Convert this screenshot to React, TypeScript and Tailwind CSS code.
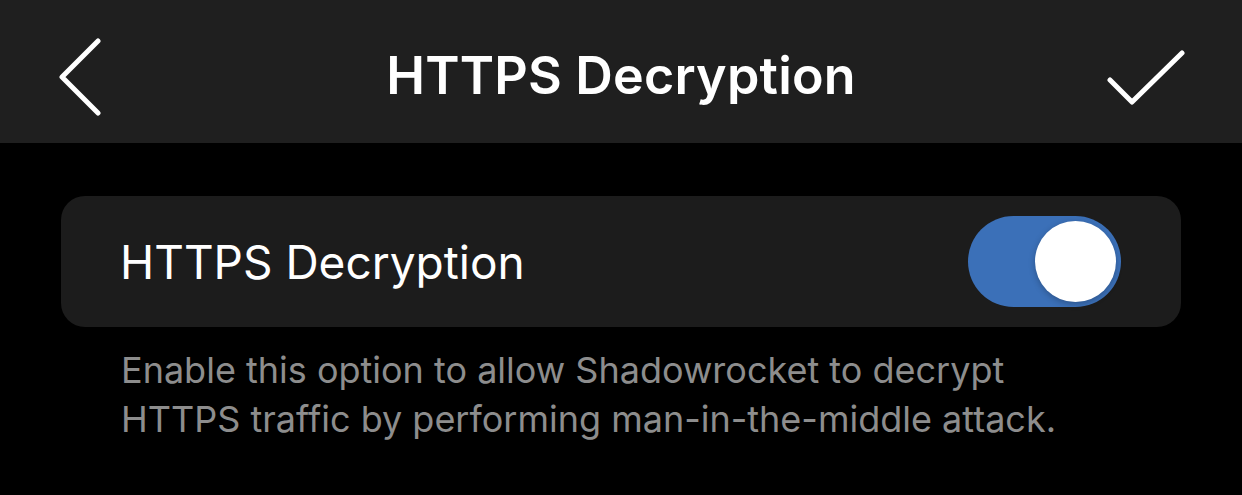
import React from "react";

const FONT = { fontFamily: "Inter, 'Noto Sans', sans-serif" };

const App = () => {
  return (
    <div className="w-[1242px] h-[495px] bg-black text-white overflow-hidden" style={FONT}>
      <header className="h-[143px] bg-[#1f1f1f] flex items-center px-[58px] pt-[10px]">
        <div className="flex-1 flex">
          <svg width="44" height="78" viewBox="0 0 44 78" fill="none">
            <path d="M40 3 L4 39 L40 75" stroke="white" strokeWidth="5" strokeLinecap="round" strokeLinejoin="round" />
          </svg>
        </div>
        <h1 className="text-[52px] font-semibold tracking-[0.2px] mt-[-2px]">HTTPS Decryption</h1>
        <div className="flex-1 flex justify-end">
          <svg width="80" height="60" viewBox="0 0 80 60" fill="none" className="mr-[-2px] mt-[6px]">
            <path d="M4 30 L26 52 L76 3" stroke="white" strokeWidth="5" strokeLinecap="round" strokeLinejoin="round" />
          </svg>
        </div>
      </header>

      <main className="px-[61px] pt-[53px]">
        <div className="h-[131px] bg-[#1c1c1c] rounded-[24px] flex items-center justify-between pl-[59px] pr-[60px]">
          <span className="text-[46px] leading-none">HTTPS Decryption</span>
          <button className="w-[153px] h-[91px] rounded-full bg-[#3b70b8] flex items-center justify-end pr-[5px]">
            <span className="w-[81px] h-[81px] rounded-full bg-white shadow-[0_2px_6px_rgba(0,0,0,0.25)]" />
          </button>
        </div>
        <p className="pl-[60px] pt-[19px] text-[36px] leading-[49px] text-[#8d8d8d]">
          Enable this option to allow Shadowrocket to decrypt
          <br />
          HTTPS traffic by performing man-in-the-middle attack.
        </p>
      </main>
    </div>
  );
};

export default App;
